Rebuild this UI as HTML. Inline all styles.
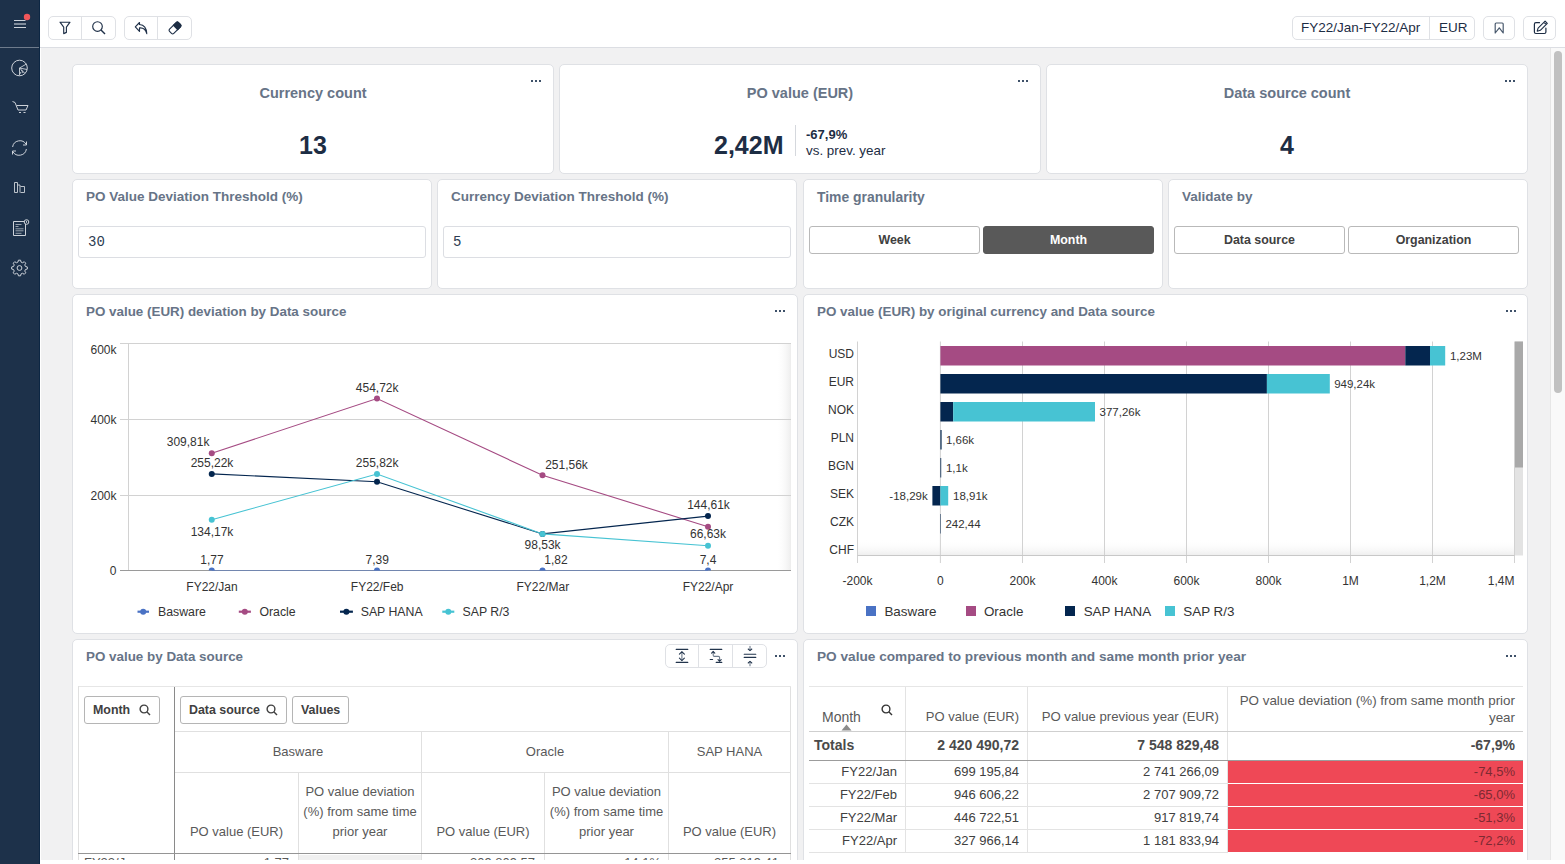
<!DOCTYPE html>
<html><head><meta charset="utf-8">
<style>
*{box-sizing:border-box;margin:0;padding:0}
html,body{width:1565px;height:864px;overflow:hidden;background:#f1f1f2;font-family:"Liberation Sans",sans-serif;}
.a{position:absolute}
#side{left:0;top:0;width:40px;height:864px;background:#1d314a;border-right:1px solid #0c2643}
#side .sep{left:0;top:47px;width:39px;height:1px;background:#6e7b8c}
#hdr{left:41px;top:0;width:1524px;height:47px;background:#fff}
#hline{left:40px;top:47px;width:1525px;height:1px;background:#dcdee3}
.wl{left:40px;top:0;width:1px;height:864px;background:#fff}
.card{position:absolute;background:#fff;border:1px solid #dfe1e5;border-radius:5px}
.ttl{position:absolute;font-weight:bold;color:#677487;font-size:13.5px;white-space:nowrap}
.dots{position:absolute;width:12px;height:3px}
.dots i{position:absolute;top:0;width:2.4px;height:2.4px;background:#3e5169}
.tb{position:absolute;border:1px solid #dfe1e5;border-radius:5px;background:#fff}
.mono{font-family:"Liberation Mono",monospace}
.t{position:absolute;white-space:nowrap}
.btn{border:1px solid #b9b9b9;border-radius:3px;background:#fff;color:#404040;font-weight:bold;font-size:12.4px;text-align:center;line-height:26px}
.btn.on{background:#595959;border-color:#595959;color:#fff}
.chip{position:absolute;border:1px solid #b5b5b5;border-radius:3px;background:#fff;color:#404040;font-weight:bold;font-size:12.4px;line-height:26px;padding-left:8px}
.th{position:absolute;text-align:center;color:#595959;font-size:13px;line-height:20px}
.td{position:absolute;text-align:right;color:#404040;font-size:13px;line-height:16px;white-space:nowrap}
.td.b{font-weight:bold;font-size:14px;line-height:17px;color:#4a4a4a}
</style></head><body>
<div id="side" class="a">
  <div class="a sep"></div>
  <svg class="a" style="left:0;top:0" width="40" height="290" viewBox="0 0 40 290" fill="none" stroke="#cdd2d9" stroke-width="1">
    <path d="M14 20.5H25.5M14 24H26M14 27.5H26" stroke-width="1.2"/>
    <path d="M14 24H26" stroke="#8591a0" stroke-width="1.3"/>
    <circle cx="27" cy="17" r="3.2" fill="#f0565a" stroke="none"/>
    <circle cx="19.5" cy="68" r="7.8"/>
    <path d="M19.5 68L26.5 64M19.5 68V75.5M19.5 68L27 69.5M19.5 68L25 73.5M21.5 70L23 73M21 72L19.8 74" stroke-width="0.9"/>
    <path d="M12.5 101.5L15 102.5L18 110H26L28 105.5H16.5M19 112.5h2M23.5 112.5h2"/>
    <path d="M26.2 144.5A7.3 7.3 0 0 0 12.6 147M26.5 141.5V145H23M12.8 151.5A7.3 7.3 0 0 0 26.4 149M12.5 154.5V151H16"/>
    <path d="M14.5 182.5h3v10h-3zM17.5 185h2.5v7.5M20.5 186.5h4v6h-4" stroke-width="0.9"/>
    <path d="M13.5 221.5h12v14h-12z"/><path d="M15.5 224.5h6M15.5 226.5h3M15.5 228.8h8M15.5 230.8h8M15.5 233.3h6" stroke-width="0.7"/>
    <circle cx="26.5" cy="222" r="2.3" fill="#1d314a"/>
    <path d="M26.5 220.8v2"  stroke-width="0.9"/>
    <path d="M27.33 266.95 L27.33 269.05 L25.40 269.56 L24.77 271.06 L25.78 272.79 L24.29 274.28 L22.56 273.27 L21.06 273.90 L20.55 275.83 L18.45 275.83 L17.94 273.90 L16.44 273.27 L14.71 274.28 L13.22 272.79 L14.23 271.06 L13.60 269.56 L11.67 269.05 L11.67 266.95 L13.60 266.44 L14.23 264.94 L13.22 263.21 L14.71 261.72 L16.44 262.73 L17.94 262.10 L18.45 260.17 L20.55 260.17 L21.06 262.10 L22.56 262.73 L24.29 261.72 L25.78 263.21 L24.77 264.94 L25.40 266.44Z" stroke-linejoin="round"/>
    <circle cx="19.5" cy="268" r="2.4"/>
  </svg>
</div>
<div class="a wl"></div>
<div id="hdr" class="a"></div>
<div class="tb" style="left:48px;top:16px;width:68px;height:24px"></div>
<div class="a" style="left:81px;top:17px;width:1px;height:22px;background:#dfe1e5"></div>
<div class="tb" style="left:124px;top:16px;width:68px;height:24px"></div>
<div class="a" style="left:157px;top:17px;width:1px;height:22px;background:#dfe1e5"></div>
<svg class="a" style="left:40px;top:8px" width="160" height="40" viewBox="0 0 160 40" fill="none" stroke="#1f3048" stroke-width="1.15">
  <path d="M20 14.2h10l-3.6 5v5.2l-2.7 1.2v-6.4z" stroke-linejoin="round"/>
  <circle cx="57.5" cy="18.5" r="4.8"/>
  <path d="M61 22l4 4" stroke-width="1.5"/>
  <path d="M99.5 14.5l-4.2 4.3 4.2 4.5v-3.4c3.5-.3 6.2 1.5 7.3 5.8-.2-5.2-3-8.8-7.3-9.2z" stroke-linejoin="round"/>
  <g transform="translate(135 20) rotate(-45)"><rect x="-6.3" y="-3" width="12.6" height="6" rx="1.6"/><path d="M0.2 -3.6H4.7A2.2 2.2 0 0 1 6.9 -1.4V1.4A2.2 2.2 0 0 1 4.7 3.6H0.2z" fill="#1d2d44" stroke="none"/></g>
</svg>
<div class="tb" style="left:1292px;top:16px;width:183px;height:24px"></div>
<div class="a" style="left:1429px;top:17px;width:1px;height:22px;background:#dfe1e5"></div>
<div class="t" style="left:1301px;top:18px;font-size:13.5px;color:#1d2d44;line-height:20px">FY22/Jan-FY22/Apr</div>
<div class="t" style="left:1439px;top:18px;font-size:13.5px;color:#1d2d44;line-height:20px">EUR</div>
<div class="tb" style="left:1483px;top:16px;width:32px;height:24px"></div>
<div class="tb" style="left:1523px;top:16px;width:33px;height:24px"></div>
<svg class="a" style="left:1480px;top:8px" width="85" height="40" viewBox="0 0 85 40" fill="none" stroke="#1d2d44" stroke-width="1.3">
  <path d="M15.2 25V16a1 1 0 0 1 1-1h6a1 1 0 0 1 1 1v9l-3.9-5.2z" stroke-linejoin="round" stroke="#4a5a6e" stroke-width="1.2"/>
  <path d="M59.5 14.7h-3.6a1.5 1.5 0 0 0-1.5 1.5v7.8a1.5 1.5 0 0 0 1.5 1.5h8.5a1.5 1.5 0 0 0 1.5-1.5v-3.8" stroke-linecap="round" stroke-width="1.2"/>
  <path d="M57.2 23.2l.9-3.1 7-7 2.2 2.2-7 7z M64 14.3l2.2 2.2" stroke-linejoin="round" stroke-width="1.1"/>
</svg>
<div id="hline" class="a"></div>

<!-- scrollbar -->
<div class="a" style="left:1550px;top:48px;width:15px;height:816px;background:#f9f9f9;border-left:1px solid #e6e6e6"></div>
<div class="a" style="left:1554px;top:51px;width:8px;height:342px;background:#c1c1c1;border-radius:4px"></div>

<!-- row1 -->
<div class="card" style="left:72px;top:64px;width:482px;height:110px"></div>
<div class="card" style="left:559px;top:64px;width:482px;height:110px"></div>
<div class="card" style="left:1046px;top:64px;width:482px;height:110px"></div>
<!-- row2 -->
<div class="card" style="left:72px;top:179px;width:360px;height:110px"></div>
<div class="card" style="left:437px;top:179px;width:360px;height:110px"></div>
<div class="card" style="left:803px;top:179px;width:360px;height:110px"></div>
<div class="card" style="left:1168px;top:179px;width:360px;height:110px"></div>
<!-- row3 -->
<div class="card" style="left:72px;top:294px;width:726px;height:340px"></div>
<div class="card" style="left:803px;top:294px;width:725px;height:340px"></div>
<!-- row4 -->
<div class="card" style="left:72px;top:639px;width:726px;height:240px"></div>
<div class="card" style="left:803px;top:639px;width:725px;height:240px"></div>


<!-- row1 content -->
<div class="dots" style="left:531px;top:80px"><i style="left:0"></i><i style="left:4px"></i><i style="left:8px"></i></div><div class="dots" style="left:1018px;top:80px"><i style="left:0"></i><i style="left:4px"></i><i style="left:8px"></i></div><div class="dots" style="left:1505px;top:80px"><i style="left:0"></i><i style="left:4px"></i><i style="left:8px"></i></div>
<div class="t ttl" style="left:72px;width:482px;text-align:center;top:85px;font-size:14.5px;line-height:17px">Currency count</div>
<div class="t" style="left:72px;width:482px;text-align:center;top:131px;font-size:25px;line-height:28px;font-weight:bold;color:#1d2d44">13</div>
<div class="t ttl" style="left:559px;width:482px;text-align:center;top:85px;font-size:14.5px;line-height:17px">PO value (EUR)</div>
<div class="t" style="left:714px;top:131px;font-size:25px;line-height:28px;font-weight:bold;color:#1d2d44">2,42M</div>
<div class="a" style="left:795px;top:125px;width:1px;height:31px;background:#d5d8dd"></div>
<div class="t" style="left:806px;top:126.5px;font-size:13px;line-height:15px;font-weight:bold;color:#1d2d44">-67,9%</div>
<div class="t" style="left:806px;top:142.5px;font-size:13.4px;line-height:16px;color:#1d2d44">vs. prev. year</div>
<div class="t ttl" style="left:1046px;width:482px;text-align:center;top:85px;font-size:14.5px;line-height:17px">Data source count</div>
<div class="t" style="left:1046px;width:482px;text-align:center;top:131px;font-size:25px;line-height:28px;font-weight:bold;color:#1d2d44">4</div>
<!-- row2 content -->
<div class="t ttl" style="left:86px;top:188.5px;font-size:13.5px;line-height:16px">PO Value Deviation Threshold (%)</div>
<div class="t ttl" style="left:451px;top:188.5px;font-size:13.5px;line-height:16px">Currency Deviation Threshold (%)</div>
<div class="t ttl" style="left:817px;top:188.5px;font-size:13.9px;line-height:16px">Time granularity</div>
<div class="t ttl" style="left:1182px;top:188.5px;font-size:13.5px;line-height:16px">Validate by</div>
<div class="a" style="left:78px;top:226px;width:348px;height:32px;border:1px solid #dcdee3;border-radius:3px;background:#fff"></div>
<div class="a" style="left:443px;top:226px;width:348px;height:32px;border:1px solid #dcdee3;border-radius:3px;background:#fff"></div>
<div class="t mono" style="left:88px;top:233px;font-size:14px;line-height:18px;color:#2c3c52">30</div>
<div class="t mono" style="left:453px;top:233px;font-size:14px;line-height:18px;color:#2c3c52">5</div>
<div class="a btn" style="left:809px;top:226px;width:171px;height:28px">Week</div>
<div class="a btn on" style="left:983px;top:226px;width:171px;height:28px">Month</div>
<div class="a btn" style="left:1174px;top:226px;width:171px;height:28px">Data source</div>
<div class="a btn" style="left:1348px;top:226px;width:171px;height:28px">Organization</div>
<svg class="a" style="left:72px;top:294px" width="726" height="340" viewBox="72 294 726 340" font-family="Liberation Sans" font-size="12" fill="#333">
<rect x="776" y="344" width="15" height="226" fill="url(#gr)"/><g stroke="#d2d2d2" stroke-width="1">
<path d="M120 343.5H791M120 419.5H791M120 495.5H791M128.5 343V571"/>
</g>
<defs><linearGradient id="gr" x1="0" x2="1" y1="0" y2="0"><stop offset="0" stop-color="#fff" stop-opacity="0"/><stop offset="1" stop-color="#ededed"/></linearGradient><linearGradient id="gb" x1="0" x2="0" y1="0" y2="1"><stop offset="0" stop-color="#fff" stop-opacity="0"/><stop offset="1" stop-color="#efefef"/></linearGradient></defs>
<path d="M120 570.5H791" stroke="#9a9a9a" stroke-width="1"/>
<g text-anchor="end" fill="#333">
<text x="116.5" y="354">600k</text><text x="116.5" y="424">400k</text><text x="116.5" y="500">200k</text><text x="116.5" y="575">0</text>
</g>
<defs><clipPath id="cb"><rect x="72" y="294" width="726" height="276.5"/></clipPath></defs><g clip-path="url(#cb)"><polyline points="211.75,570.5 377,570.5 542.5,570.5 708,570.5" fill="none" stroke="#4a72c4" stroke-width="1.1"/><circle cx="211.75" cy="570.5" r="3.0" fill="#4a72c4"/><circle cx="377" cy="570.5" r="3.0" fill="#4a72c4"/><circle cx="542.5" cy="570.5" r="3.0" fill="#4a72c4"/><circle cx="708" cy="570.5" r="3.0" fill="#4a72c4"/></g><polyline points="211.75,453.3 377,398.5 542.5,475.3 708,526.7" fill="none" stroke="#a54b83" stroke-width="1.1"/><circle cx="211.75" cy="453.3" r="3.0" fill="#a54b83"/><circle cx="377" cy="398.5" r="3.0" fill="#a54b83"/><circle cx="542.5" cy="475.3" r="3.0" fill="#a54b83"/><circle cx="708" cy="526.7" r="3.0" fill="#a54b83"/><polyline points="211.75,473.9 377,481.8 542.5,533.9 708,516.1" fill="none" stroke="#04264f" stroke-width="1.1"/><circle cx="211.75" cy="473.9" r="3.0" fill="#04264f"/><circle cx="377" cy="481.8" r="3.0" fill="#04264f"/><circle cx="542.5" cy="533.9" r="3.0" fill="#04264f"/><circle cx="708" cy="516.1" r="3.0" fill="#04264f"/><polyline points="211.75,519.7 377,474.0 542.5,533.9 708,545.8" fill="none" stroke="#47c3d3" stroke-width="1.1"/><circle cx="211.75" cy="519.7" r="3.0" fill="#47c3d3"/><circle cx="377" cy="474.0" r="3.0" fill="#47c3d3"/><circle cx="542.5" cy="533.9" r="3.0" fill="#47c3d3"/><circle cx="708" cy="545.8" r="3.0" fill="#47c3d3"/>
<g text-anchor="middle" fill="#333">
<text x="188.1" y="445.5">309,81k</text>
<text x="377.2" y="392">454,72k</text>
<text x="212" y="466.5">255,22k</text>
<text x="377.2" y="466.5">255,82k</text>
<text x="212" y="536">134,17k</text>
<text x="212" y="564">1,77</text>
<text x="377.2" y="564">7,39</text>
<text x="566.5" y="469">251,56k</text>
<text x="542.6" y="549">98,53k</text>
<text x="556" y="564">1,82</text>
<text x="708.5" y="509">144,61k</text>
<text x="708" y="538">66,63k</text>
<text x="708" y="564">7,4</text>
<text x="212" y="591">FY22/Jan</text>
<text x="377.2" y="591">FY22/Feb</text>
<text x="542.8" y="591">FY22/Mar</text>
<text x="708" y="591">FY22/Apr</text>
</g>
<g stroke-width="2.2">
<path d="M137.5 611.7H149" stroke="#4a72c4"/><circle cx="143.2" cy="611.7" r="3.0" fill="#4a72c4"/>
<path d="M238.8 611.7H250.9" stroke="#a54b83"/><circle cx="244.8" cy="611.7" r="3.0" fill="#a54b83"/>
<path d="M340 611.7H352.9" stroke="#04264f"/><circle cx="346.4" cy="611.7" r="3.0" fill="#04264f"/>
<path d="M442.3 611.7H454.3" stroke="#47c3d3"/><circle cx="448.3" cy="611.7" r="3.0" fill="#47c3d3"/>
</g>
<g font-size="12.3" fill="#333">
<text x="158" y="616">Basware</text><text x="259.4" y="616">Oracle</text><text x="360.7" y="616">SAP HANA</text><text x="462.5" y="616">SAP R/3</text>
</g>
</svg>
<div class="t ttl" style="left:86px;top:304px;font-size:13.4px;line-height:16px">PO value (EUR) deviation by Data source</div>
<div class="dots" style="left:775px;top:310px"><i style="left:0"></i><i style="left:4px"></i><i style="left:8px"></i></div>
<svg class="a" style="left:803px;top:294px" width="725" height="340" viewBox="803 294 725 340" font-family="Liberation Sans" font-size="12" fill="#333">
<rect x="858" y="540" width="656" height="15" fill="url(#gb)"/><path d="M857.5 341.5V563 M940.4 341.5V563 M1022.5 341.5V563 M1104.5 341.5V563 M1186.5 341.5V563 M1268.5 341.5V563 M1350.5 341.5V563 M1432.5 341.5V563 M1514.5 341.5V563" stroke="#d2d2d2" stroke-width="1"/>
<path d="M857.5 555.5H1514.5" stroke="#c8c8c8" stroke-width="1"/>
<rect x="940.4" y="346" width="464.9" height="19.5" fill="#a54b83"/><rect x="1405.3" y="346" width="24.7" height="19.5" fill="#04264f"/><rect x="1430.0" y="346" width="15.2" height="19.5" fill="#47c3d3"/><rect x="940.4" y="374" width="326.5" height="19.5" fill="#04264f"/><rect x="1266.9" y="374" width="62.9" height="19.5" fill="#47c3d3"/><rect x="940.4" y="402" width="12.8" height="19.5" fill="#04264f"/><rect x="953.2" y="402" width="141.8" height="19.5" fill="#47c3d3"/><rect x="940.4" y="430" width="1.2" height="19.5" fill="#04264f"/><rect x="940.4" y="458" width="0.8" height="19.5" fill="#04264f"/><rect x="932.4" y="486" width="8.0" height="19.5" fill="#04264f"/><rect x="940.4" y="486" width="7.8" height="19.5" fill="#47c3d3"/><rect x="940.4" y="514" width="0.5" height="19.5" fill="#04264f"/>
<g text-anchor="end"><text x="854" y="358">USD</text><text x="854" y="386">EUR</text><text x="854" y="414">NOK</text><text x="854" y="442">PLN</text><text x="854" y="470">BGN</text><text x="854" y="498">SEK</text><text x="854" y="526">CZK</text><text x="854" y="554">CHF</text></g>
<g text-anchor="middle"><text x="857.5" y="585">-200k</text><text x="940.4" y="585">0</text><text x="1022.5" y="585">200k</text><text x="1104.5" y="585">400k</text><text x="1186.5" y="585">600k</text><text x="1268.5" y="585">800k</text><text x="1350.5" y="585">1M</text><text x="1432.5" y="585">1,2M</text></g>
<text x="1514.5" y="585" text-anchor="end">1,4M</text>
<rect x="1515" y="341.5" width="8" height="214" fill="#e3e3e3"/>
<rect x="1515" y="341.5" width="8" height="126" fill="#a9a9a9"/>
<g font-size="11.5">
<text x="1449.9" y="360">1,23M</text>
<text x="1334.2" y="388">949,24k</text>
<text x="1099.5" y="416">377,26k</text>
<text x="945.9" y="444">1,66k</text>
<text x="945.9" y="472">1,1k</text>
<text x="927.7" y="500" text-anchor="end">-18,29k</text>
<text x="953" y="500">18,91k</text>
<text x="945.4" y="528">242,44</text>
</g>
<rect x="866" y="606" width="10" height="10" fill="#4a72c4"/>
<rect x="966" y="606" width="10" height="10" fill="#a54b83"/>
<rect x="1065" y="606" width="10" height="10" fill="#04264f"/>
<rect x="1165" y="606" width="10" height="10" fill="#47c3d3"/>
<g font-size="13.4">
<text x="884.4" y="616">Basware</text><text x="983.9" y="616">Oracle</text><text x="1083.7" y="616">SAP HANA</text><text x="1183.3" y="616">SAP R/3</text>
</g>
</svg>
<div class="t ttl" style="left:817px;top:304px;font-size:13.4px;line-height:16px">PO value (EUR) by original currency and Data source</div>
<div class="dots" style="left:1506px;top:310px"><i style="left:0"></i><i style="left:4px"></i><i style="left:8px"></i></div>

<!-- row4 left table -->
<div class="t ttl" style="left:86px;top:649px;font-size:13.4px;line-height:16px">PO value by Data source</div>
<div class="dots" style="left:775px;top:655px"><i style="left:0"></i><i style="left:4px"></i><i style="left:8px"></i></div>
<div class="tb" style="left:665px;top:644px;width:102px;height:24px"></div>
<div class="a" style="left:698px;top:645px;width:1px;height:22px;background:#dfe1e5"></div>
<div class="a" style="left:732px;top:645px;width:1px;height:22px;background:#dfe1e5"></div>
<svg class="a" style="left:665px;top:644px" width="102" height="24" viewBox="0 0 102 24" fill="none" stroke="#22344c" stroke-width="1.1" stroke-linecap="round">
  <path d="M11.2 5.4h11.6M11.2 18.4h11.6"/>
  <path d="M16.9 8v8.4" stroke="#6d7b8c"/>
  <path d="M14.4 10.2l2.5-2.4 2.5 2.4M14.4 14.2l2.5 2.4 2.5-2.4"/>
  <path d="M45.2 5.4h11.6M45.2 15.5h2.4M51.2 18.4h5.6"/>
  <path d="M48.2 7.6v3.6a1.2 1.2 0 0 0 1.2 1.2h4a1.2 1.2 0 0 1 1.2 1.2v3.2" stroke="#6d7b8c"/>
  <path d="M46.6 9.2l1.6-1.6 1.6 1.6M53 15.6l1.6 1.6 1.6-1.6"/>
  <path d="M79.2 10.3h11.6M79.2 13.4h11.6"/>
  <path d="M85 2.2v4M85 17.6v4.2" stroke="#6d7b8c"/>
  <path d="M83.2 5l1.8 1.6 1.8-1.6M83.2 19l1.8-1.6 1.8 1.6"/>
</svg>
<div class="a" style="left:78px;top:686px;width:713px;height:1px;background:#e6e6e6"></div>
<div class="a" style="left:78px;top:686px;width:1px;height:178px;background:#e0e0e0"></div>
<div class="a" style="left:174px;top:687px;width:1px;height:177px;background:#8a8a8a"></div>
<div class="chip" style="left:84px;top:696px;width:76px;height:28px">Month</div>
<svg class="a" style="left:137.7px;top:703px" width="14" height="14" viewBox="0 0 14 14" fill="none" stroke="#404040" stroke-width="1.4"><circle cx="6" cy="6" r="3.9"/><path d="M8.8 8.8L12 12"/></svg>
<div class="chip" style="left:180px;top:696px;width:107px;height:28px">Data source</div>
<svg class="a" style="left:265px;top:703px" width="14" height="14" viewBox="0 0 14 14" fill="none" stroke="#404040" stroke-width="1.4"><circle cx="6" cy="6" r="3.9"/><path d="M8.8 8.8L12 12"/></svg>
<div class="chip" style="left:292px;top:696px;width:57px;height:28px">Values</div>
<div class="a" style="left:175px;top:731px;width:616px;height:1px;background:#e0e0e0"></div>
<div class="a" style="left:175px;top:772px;width:616px;height:1px;background:#e0e0e0"></div>
<div class="a" style="left:421px;top:732px;width:1px;height:132px;background:#e0e0e0"></div>
<div class="a" style="left:668px;top:732px;width:1px;height:132px;background:#e0e0e0"></div>
<div class="a" style="left:790px;top:687px;width:1px;height:177px;background:#e0e0e0"></div>
<div class="a" style="left:298px;top:773px;width:1px;height:91px;background:#e0e0e0"></div>
<div class="a" style="left:544px;top:773px;width:1px;height:91px;background:#e0e0e0"></div>
<div class="a" style="left:299px;top:855px;width:122px;height:9px;background:#f0f0f0"></div>
<div class="a" style="left:78px;top:853px;width:713px;height:1px;background:#959595"></div>
<div class="th" style="left:175px;top:742px;width:246px">Basware</div>
<div class="th" style="left:422px;top:742px;width:246px">Oracle</div>
<div class="th" style="left:669px;top:742px;width:121px">SAP HANA</div>
<div class="th" style="left:175px;top:822px;width:123px">PO value (EUR)</div>
<div class="th" style="left:299px;top:782px;width:122px">PO value deviation<br>(%) from same time<br>prior year</div>
<div class="th" style="left:422px;top:822px;width:122px">PO value (EUR)</div>
<div class="th" style="left:545px;top:782px;width:123px">PO value deviation<br>(%) from same time<br>prior year</div>
<div class="th" style="left:669px;top:822px;width:121px">PO value (EUR)</div>
<div class="t" style="left:84px;top:854.5px;font-size:13px;line-height:16px;color:#595959">FY22/Jan</div>
<div class="t" style="left:175px;top:854.5px;width:114px;text-align:right;font-size:13px;line-height:16px;color:#595959">1,77</div>
<div class="t" style="left:422px;top:854.5px;width:113px;text-align:right;font-size:13px;line-height:16px;color:#595959">309 809,57</div>
<div class="t" style="left:545px;top:854.5px;width:116px;text-align:right;font-size:13px;line-height:16px;color:#595959">-14,1%</div>
<div class="t" style="left:669px;top:854.5px;width:110px;text-align:right;font-size:13px;line-height:16px;color:#595959">255 219,41</div>

<!-- row4 right table -->
<div class="t ttl" style="left:817px;top:649px;font-size:13.65px;line-height:16px">PO value compared to previous month and same month prior year</div>
<div class="dots" style="left:1506px;top:655px"><i style="left:0"></i><i style="left:4px"></i><i style="left:8px"></i></div>
<div class="a" style="left:809px;top:686px;width:714px;height:1px;background:#e6e6e6"></div>
<div class="a" style="left:905px;top:687px;width:1px;height:166px;background:#e3e3e3"></div>
<div class="a" style="left:1027px;top:687px;width:1px;height:166px;background:#e3e3e3"></div>
<div class="a" style="left:1227px;top:687px;width:1px;height:166px;background:#e3e3e3"></div>
<div class="t" style="left:822px;top:709px;font-size:14px;line-height:17px;color:#595959">Month</div>
<svg class="a" style="left:880px;top:703px" width="14" height="14" viewBox="0 0 14 14" fill="none" stroke="#333" stroke-width="1.4"><circle cx="6" cy="6" r="3.9"/><path d="M8.8 8.8L12 12"/></svg>
<svg class="a" style="left:840px;top:723px" width="13" height="8" viewBox="0 0 13 8"><path d="M1.5 7.5L6.5 1.5L11.5 7.5z" fill="#8c8c8c"/></svg>
<div class="td" style="left:906px;top:709px;width:113px;font-size:13px;color:#595959">PO value (EUR)</div>
<div class="td" style="left:1028px;top:709px;width:191px;font-size:13.2px;color:#595959">PO value previous year (EUR)</div>
<div class="td" style="left:1228px;top:692px;width:287px;font-size:13.4px;line-height:17px;color:#595959">PO value deviation (%) from same month prior<br>year</div>
<div class="a" style="left:809px;top:731px;width:714px;height:1px;background:#cfcfcf"></div>
<div class="t" style="left:814px;top:737px;font-size:14px;line-height:17px;font-weight:bold;color:#4a4a4a">Totals</div>
<div class="td b" style="left:906px;top:737px;width:113px">2 420 490,72</div>
<div class="td b" style="left:1028px;top:737px;width:191px">7 548 829,48</div>
<div class="td b" style="left:1228px;top:737px;width:287px">-67,9%</div>
<div class="a" style="left:809px;top:760px;width:714px;height:1px;background:#9c9c9c"></div>
<div class="a" style="left:1228px;top:761px;width:295px;height:22px;background:#ef4856"></div><div class="td" style="left:809px;top:763.5px;width:88px">FY22/Jan</div><div class="td" style="left:906px;top:763.5px;width:113px">699 195,84</div><div class="td" style="left:1028px;top:763.5px;width:191px">2 741 266,09</div><div class="td" style="left:1228px;top:763.5px;width:287px;color:#7d2a32">-74,5%</div><div class="a" style="left:809px;top:783px;width:419px;height:1px;background:#e3e3e3"></div><div class="a" style="left:1228px;top:784px;width:295px;height:22px;background:#ef4856"></div><div class="td" style="left:809px;top:786.5px;width:88px">FY22/Feb</div><div class="td" style="left:906px;top:786.5px;width:113px">946 606,22</div><div class="td" style="left:1028px;top:786.5px;width:191px">2 707 909,72</div><div class="td" style="left:1228px;top:786.5px;width:287px;color:#7d2a32">-65,0%</div><div class="a" style="left:809px;top:806px;width:419px;height:1px;background:#e3e3e3"></div><div class="a" style="left:1228px;top:807px;width:295px;height:22px;background:#ef4856"></div><div class="td" style="left:809px;top:809.5px;width:88px">FY22/Mar</div><div class="td" style="left:906px;top:809.5px;width:113px">446 722,51</div><div class="td" style="left:1028px;top:809.5px;width:191px">917 819,74</div><div class="td" style="left:1228px;top:809.5px;width:287px;color:#7d2a32">-51,3%</div><div class="a" style="left:809px;top:829px;width:419px;height:1px;background:#e3e3e3"></div><div class="a" style="left:1228px;top:830px;width:295px;height:22px;background:#ef4856"></div><div class="td" style="left:809px;top:832.5px;width:88px">FY22/Apr</div><div class="td" style="left:906px;top:832.5px;width:113px">327 966,14</div><div class="td" style="left:1028px;top:832.5px;width:191px">1 181 833,94</div><div class="td" style="left:1228px;top:832.5px;width:287px;color:#7d2a32">-72,2%</div><div class="a" style="left:809px;top:852px;width:419px;height:1px;background:#e3e3e3"></div>
<div class="a" style="left:809px;top:852px;width:419px;height:1px;background:#e3e3e3"></div>
<div class="a" style="left:40px;top:860px;width:1525px;height:4px;background:#fff"></div>
</body></html>
